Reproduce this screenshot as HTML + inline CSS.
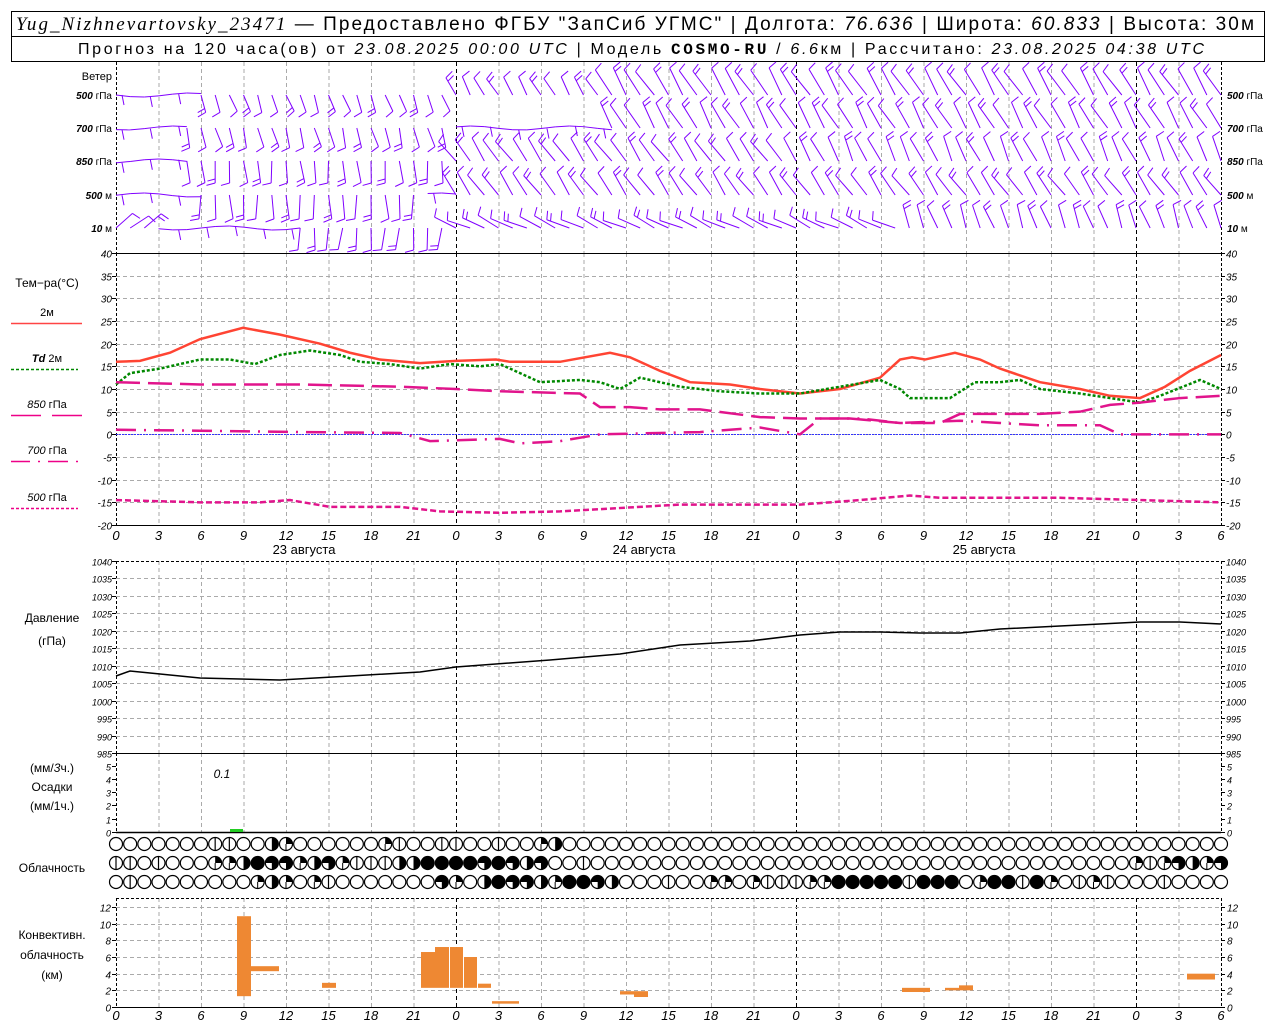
<!DOCTYPE html>
<html><head><meta charset="utf-8"><style>
html,body{margin:0;padding:0;background:#fff;width:1280px;height:1024px;overflow:hidden}
svg{display:block}
text{font-family:"Liberation Sans","DejaVu Sans",sans-serif}
.it{font-style:italic}
</style></head><body>
<svg id="s" width="1280" height="1024" xmlns="http://www.w3.org/2000/svg">
<rect x="11.5" y="11.5" width="1253" height="50" fill="none" stroke="#000"/>
<line x1="11" y1="36.5" x2="1265" y2="36.5" stroke="#000"/>
<text x="16" y="30" font-size="19" textLength="1238" lengthAdjust="spacing"><tspan font-family="Liberation Serif" font-style="italic">Yug_Nizhnevartovsky_23471</tspan> — Предоставлено ФГБУ "ЗапСиб УГМС" | Долгота: <tspan font-style="italic">76.636</tspan> | Широта: <tspan font-style="italic">60.833</tspan> | Высота: 30м</text>
<text x="78" y="54" font-size="16" textLength="1126" lengthAdjust="spacing">Прогноз на 120 часа(ов) от <tspan font-style="italic">23.08.2025 00:00 UTC</tspan>  | Модель <tspan font-weight="bold" font-family="Liberation Mono">COSMO-RU</tspan> / <tspan font-style="italic">6.6</tspan>км | Рассчитано: <tspan font-style="italic">23.08.2025 04:38 UTC</tspan></text>
<g id="g"></g>
</svg>
<script>
var G=document.getElementById('g'),h='';
function X(hr){return 116+hr*14.1667}
function ln(x1,y1,x2,y2,c,w,d){h+='<line x1="'+x1+'" y1="'+y1+'" x2="'+x2+'" y2="'+y2+'" stroke="'+c+'" stroke-width="'+(w||1)+'"'+(d?' stroke-dasharray="'+d+'"':'')+'/>';}
function tx(x,y,s,sz,anc,ex){h+='<text x="'+x+'" y="'+y+'" font-size="'+(sz||11)+'" text-anchor="'+(anc||'start')+'" '+(ex||'')+'>'+s+'</text>';}
function vgrid(y1,y2){for(var i=0;i<=26;i++){var x=X(i*3)+0.5;var day=(i%8==0);if(i==0||i==26)continue;ln(x,y1,x,y2,day?'#000':'#aaa',1,'4,3');}
 ln(116.5,y1,116.5,y2,'#000',1,'3,2');ln(1221.5,y1,1221.5,y2,'#000',1,'3,2');}
vgrid(62,253);vgrid(253,525);vgrid(561,753);vgrid(753,832);vgrid(898,1008);
for(var v=40;v>=-20;v-=5){var y=Math.round(253+(40-v)*272/60)+0.5;
 if(v!=40&&v!=-20)ln(116,y,1221,y,'#aaa',1,'4,3');
 ln(112,y,116,y,'#000');ln(1221,y,1225,y,'#000');
 tx(112,y+4,v,10,'end','class="it"');tx(1226,y+4,v,10,'start','class="it"');}
ln(116,253.5,1221,253.5,'#000');ln(116,525.5,1221,525.5,'#000');
ln(116,434.5,1221,434.5,'#33f',1,'2,1');
for(var i=0;i<=11;i++){var p=1040-i*5;var y=Math.round(561+i*192/11)+0.5;
 if(i>0&&i<11)ln(116,y,1221,y,'#aaa',1,'4,3');
 ln(112,y,116,y,'#000');ln(1221,y,1225,y,'#000');
 tx(112,y+4,p,9,'end','class="it"');tx(1226,y+4,p,9,'start','class="it"');}
ln(116,561.5,1221,561.5,'#000',1,'3,2');ln(116,753.5,1221,753.5,'#000');
for(var v=0;v<=5;v++){var y=Math.round(832-v*13.3)+0.5;ln(112,y,116,y,'#000');ln(1221,y,1225,y,'#000');
 tx(111,y+4,v,9,'end','class="it"');tx(1227,y+4,v,9,'start','class="it"');}
ln(116,832.5,1221,832.5,'#000',1.5);
for(var v=0;v<=12;v+=2){var y=Math.round(1007-v*8.33)+0.5;if(v>0)ln(116,y,1221,y,'#aaa',1,'4,3');
 ln(112,y,116,y,'#000');ln(1221,y,1225,y,'#000');
 tx(111,y+4,v,10,'end','class="it"');tx(1227,y+4,v,10,'start','class="it"');}
ln(116,898.5,1221,898.5,'#000',1,'3,2');ln(116,1007.5,1221,1007.5,'#000');
function xl(y){for(var i=0;i<=26;i++){var hr=(i*3)%24;tx(X(i*3),y,hr,13,'middle','class="it"');}}
xl(540);xl(1020);
tx(304,554,'23  августа',13,'middle');tx(644,554,'24  августа',13,'middle');tx(984,554,'25  августа',13,'middle');
tx(112,80,'Ветер',11,'end');
var wl=[['500','гПа',95],['700','гПа',128],['850','гПа',161],['500','м',195],['10','м',228]];
wl.forEach(function(a){tx(112,a[2]+4,'<tspan class="it" font-weight="bold" font-size="10">'+a[0]+'</tspan> '+a[1],10,'end');
 tx(1227,a[2]+4,'<tspan class="it" font-weight="bold" font-size="10">'+a[0]+'</tspan> '+a[1],10,'start');});
tx(47,287,'Тем−ра(°C)',12,'middle');
tx(47,316,'2м',11,'middle');ln(11,323.5,82,323.5,'#f44',1.5);
tx(47,362,'<tspan class="it" font-weight="bold">Td</tspan>  2м',11,'middle');ln(11,369.5,78,369.5,'#080',1.5,'3,2');
tx(47,408,'<tspan class="it">850</tspan> гПа',11,'middle');ln(11,415.5,41,415.5,'#e08',1.5);ln(52,415.5,82,415.5,'#e08',1.5);
tx(47,454,'<tspan class="it">700</tspan> гПа',11,'middle');ln(11,461.5,30,461.5,'#e08',1.5);ln(38,461.5,40,461.5,'#e08',1.5);ln(48,461.5,68,461.5,'#e08',1.5);ln(76,461.5,78,461.5,'#e08',1.5);
tx(47,501,'<tspan class="it">500</tspan> гПа',11,'middle');ln(11,508.5,78,508.5,'#e08',1.5,'3,2');
tx(52,622,'Давление',12,'middle');tx(52,645,'(гПа)',12,'middle');
tx(52,772,'(мм/<tspan class="it">3</tspan>ч.)',12,'middle');tx(52,791,'Осадки',12,'middle');tx(52,810,'(мм/1ч.)',12,'middle');
tx(52,872,'Облачность',12,'middle');
tx(52,939,'Конвективн.',12,'middle');tx(52,959,'облачность',12,'middle');tx(52,979,'(км)',12,'middle');
tx(222,778,'0.1',12,'middle','class="it"');
h+='<rect x="230" y="829" width="13" height="3" fill="#2c2"/>';
function TY(v){return 253+(40-v)*272/60}
function poly(pts,c,w,d,fy){var s='';for(var i=0;i<pts.length;i+=2)s+=pts[i]+','+(fy?fy(pts[i+1]):pts[i+1])+' ';
 h+='<polyline points="'+s+'" fill="none" stroke="'+c+'" stroke-width="'+w+'"'+(d?' stroke-dasharray="'+d+'"':'')+'/>';}
poly([116,16,140,16.2,170,18,200,21,243,23.5,280,22,320,20,350,18,380,16.5,420,15.7,456,16.2,496,16.5,510,16,560,16,610,18,630,17,660,14,690,11.5,730,11,760,10,800,9,840,10,880,12.5,900,16.5,912,17,925,16.5,955,18,980,16.5,1000,14.5,1040,11.5,1080,10,1110,8.5,1140,8,1165,10.5,1190,14,1221,17.5],'#f43',2.5,null,TY);
poly([116,11,130,13.5,160,14.5,200,16.5,230,16.5,255,15.5,280,17.5,310,18.5,340,17.5,360,16,390,15.5,420,14.5,450,15.5,480,15,500,15.5,520,13.5,540,11.5,580,12,600,11.5,620,10,640,12.5,680,10.5,720,9.5,760,9,800,9,840,10.5,880,12,900,10,910,8,950,8,975,11.5,1000,11.5,1020,12,1040,10,1080,9,1110,8,1140,7,1160,8.5,1200,12,1221,10],'#080',2.5,'3,2',TY);
poly([116,11.5,200,11,300,11,400,10.5,456,10,500,9.5,580,9,590,7.5,600,6,630,6,660,5.5,700,5.5,760,3.8,800,3.5,850,3.5,900,2.5,940,2.5,960,4.5,1000,4.5,1040,4.5,1080,5,1110,6.5,1140,7,1180,8,1221,8.5],'#e1148c',2.5,'24,8',TY);
poly([116,1,200,0.8,300,0.5,400,0.3,430,-1.5,500,-1,520,-2,560,-1.5,600,0,700,0.5,760,1.5,800,0,820,3.5,860,3.5,900,2.5,960,3,1000,2.5,1040,2,1100,2,1120,0,1221,0],'#e1148c',2.5,'20,8,2,8',TY);
poly([116,-14.5,200,-15,260,-15,290,-14.5,330,-16,400,-16,440,-17,500,-17.3,560,-17,600,-16.5,680,-15.5,800,-15.5,860,-14.5,910,-13.5,940,-14,1000,-14,1060,-14,1221,-15],'#e1148c',2.5,'6,3',TY);
poly([116,676,130,671,150,673,200,678,280,680,350,676,420,672,456,667,550,660,620,654,680,645,750,641,800,635,840,632,880,632,920,633,960,633,1000,629,1060,626,1140,622,1180,622,1221,624],'#000',1.5);
function CY(v){return 1007-v*8.33}
[[237,251,1.3,10.9],[251,279,4.3,4.9],[322,336,2.3,2.9],[421,435,2.3,6.6],[435,449,2.3,7.2],[450,463,2.3,7.2],[464,477,2.3,6.0],[478,491,2.3,2.8],[492,519,0.4,0.7],[620,634,1.5,1.9],[634,648,1.2,1.9],[902,930,1.8,2.3],[945,959,2.0,2.3],[959,973,2.0,2.6],[1187,1215,3.3,4.0]].forEach(function(b){
 h+='<rect x="'+b[0]+'" y="'+CY(b[3])+'" width="'+(b[1]-b[0])+'" height="'+(CY(b[2])-CY(b[3]))+'" fill="#ee8833"/>';});
var rows=[
'ooooooo||oohqooooooq|oo||oo|ooqhooooooooooooooooooooooooooooooooooooooooooooooo|',
'||o|oooqqhf33qh3q|||hhffff3f3h3oo|ooooooooooooooooooooooooooooooooooooooq|q3hq3',
'o|ooooooooqhqoq|ooooooo3qohf33hqff3hooo|ooqqoq|||qqfffff|fffoqff|fqo|q|ooo|oooo'];
var ry=[844,863,882];
rows.forEach(function(r,k){for(var i=0;i<79;i++){var c=r[i]||'o',cx=X(i),cy=ry[k],R=6.5;
 h+='<circle cx="'+cx+'" cy="'+cy+'" r="'+R+'" fill="#fff" stroke="#000" stroke-width="1.2"/>';
 if(c=='|')ln(cx,cy-R,cx,cy+R,'#000',1.2);
 else if(c=='q')h+='<path d="M'+cx+','+cy+' L'+cx+','+(cy-R)+' A'+R+','+R+' 0 0 1 '+(cx+R)+','+cy+' Z" fill="#000"/>'+'<line x1="'+cx+'" y1="'+cy+'" x2="'+cx+'" y2="'+(cy+R)+'" stroke="#000"/>';
 else if(c=='h')h+='<path d="M'+cx+','+(cy-R)+' A'+R+','+R+' 0 0 1 '+cx+','+(cy+R)+' Z" fill="#000"/>';
 else if(c=='3')h+='<path d="M'+cx+','+cy+' L'+(cx-R)+','+cy+' A'+R+','+R+' 0 1 1 '+cx+','+(cy+R)+' Z" fill="#000"/>';
 else if(c=='f')h+='<circle cx="'+cx+'" cy="'+cy+'" r="'+R+'" fill="#000"/>';
}});
var C='#8000ff';
var lv=[[95,function(x){return x<200?[180,0]:x<456?[290,18]:x<600?[120,20]:[122,30]}],
[128,function(x){return x<180?[180,0]:x<456?[285,20]:x<600?[170,0]:[120,28]}],
[161,function(x){return x<180?[172,0]:x<456?[275,22]:x<800?[125,26]:[115,26]}],
[195,function(x){return x<200?[175,0]:x<420?[272,24]:x<456?[172,0]:[125,26]}],
[228,function(x){return x<150?[40,22]:x<300?[182,0]:x<456?[265,22]:x<900?[155,24]:[110,24]}]];
lv.forEach(function(L,k){var y0=L[0];
 for(var i=0;i<79;i++){var x=X(i),r=L[1](x),len=r[1];
  if(len==0){var x2=X(i+1),yy=y0+Math.sin(i*0.9+k)*2;ln(x,yy,x2,y0+Math.sin((i+1)*0.9+k)*2,C,1);
   if(i%2==0)ln(x+6,yy,x+8,yy+10,C,1);continue;}
  var a=r[0]+Math.sin(i*1.7+k*2.3)*7;
  var rad=a*Math.PI/180,ex=x+Math.cos(rad)*len,ey=y0-Math.sin(rad)*len;
  ln(x,y0,ex,ey,C,1);
  var br=(a-75)*Math.PI/180;
  ln(ex,ey,ex+Math.cos(br)*9,ey-Math.sin(br)*9,C,1);
  if((i+k)%3==0){var mx=x+Math.cos(rad)*(len-4),my=y0-Math.sin(rad)*(len-4);ln(mx,my,mx+Math.cos(br)*8,my-Math.sin(br)*8,C,1);}
 }});
G.innerHTML=h;
</script>
</body></html>
